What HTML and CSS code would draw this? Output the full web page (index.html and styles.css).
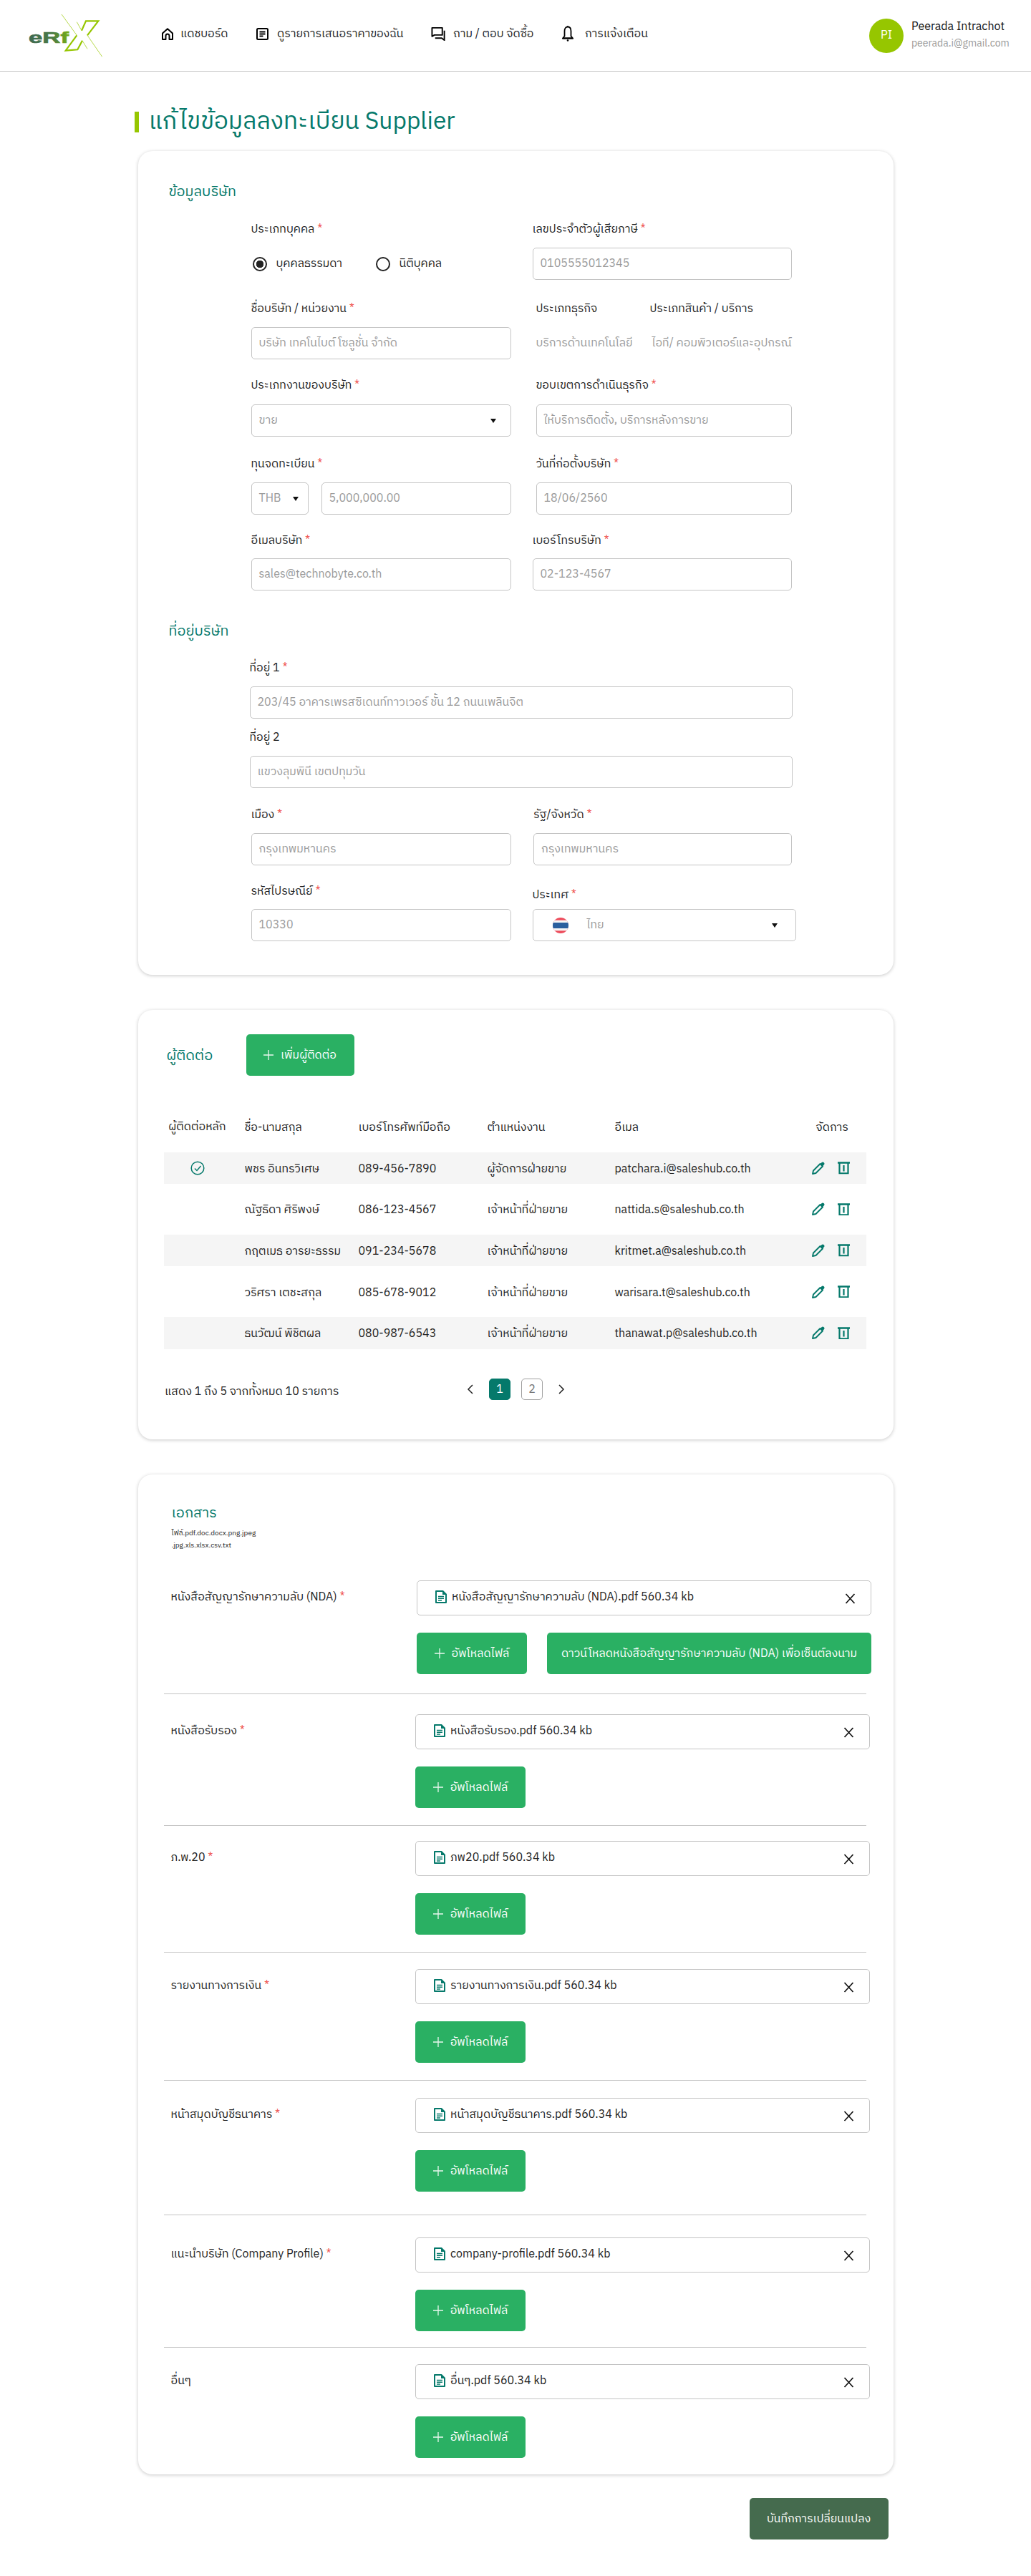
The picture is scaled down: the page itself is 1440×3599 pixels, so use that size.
FILE: index.html
```html
<!DOCTYPE html>
<html lang="th">
<head>
<meta charset="utf-8">
<title>แก้ไขข้อมูลลงทะเบียน Supplier</title>
<link rel="stylesheet" href="styles.css">
</head>
<body>
<svg class="sprite" width="0" height="0" aria-hidden="true">
  <defs>
    <symbol id="i-file" viewBox="0 0 16 18"><path d="M1 1h9.500L15 5.500V17H1z" fill="#fff" stroke="#05796b" stroke-width="2" stroke-linejoin="round"/><path d="M10 1l5 5h-5z" fill="#05796b"/><path d="M4 8.500h8M4 11.300h8M4 14h5" stroke="#05796b" stroke-width="1.600"/></symbol>
    <symbol id="i-x" viewBox="0 0 15 15"><path d="M1.500 1l12 13M13.500 1l-12 13" stroke="#111" stroke-width="1.700" fill="none"/></symbol>
    <symbol id="i-plus" viewBox="0 0 14 14"><path d="M7 0v14M0 7h14" stroke="#fff" stroke-width="1.300" opacity=".9"/></symbol>
    <symbol id="i-pen" viewBox="0 0 18 18"><path d="M1 17l1-4.500L11.500 3 15 6.500 5.500 16z" fill="none" stroke="#05796b" stroke-width="1.900" stroke-linejoin="round"/><path d="M11.500 3.500l2-2.200a2.100 2.100 0 0 1 3.200 3.200l-2 2.200z" fill="#05796b"/></symbol>
    <symbol id="i-trash" viewBox="0 0 17 17.400"><path d="M0 1.500h17" stroke="#05796b" stroke-width="2.400"/><path d="M2.500 2v14.300h12V2" fill="none" stroke="#05796b" stroke-width="2.200"/><path d="M8.500 5v8.500" stroke="#05796b" stroke-width="2.200"/></symbol>
  </defs>
</svg>

<header class="topbar">
  <svg class="logo" viewBox="0 0 103 60" role="img" aria-label="eRfX">
    <defs>
      <linearGradient id="logo-grad" gradientUnits="userSpaceOnUse" x1="0" x2="56" y1="0" y2="0"><stop offset="0" stop-color="#3f6a52"/><stop offset=".6" stop-color="#4a7a44"/><stop offset="1" stop-color="#76ae14"/></linearGradient>
    </defs>
    <text x="0" y="40" class="logo-text" fill="url(#logo-grad)" textLength="56" lengthAdjust="spacingAndGlyphs">eRf</text>
    <path d="M74 22.700L80 9.300h17.300L82 29.300M67.300 29.300L51.700 50.700 68.300 49.300 75 36.700" fill="none" stroke="#96c600" stroke-width="2.200"/>
    <path d="M46 0L67.300 29.300M67.300 10.700L74 22.700M82 29.300L102.700 59.300M75 36.700L82 48.300" fill="none" stroke="#a4cf1e" stroke-width=".8"/>
  </svg>
  <nav class="nav">
    <a class="nav-item">
      <svg class="nav-icon nav-icon-home" viewBox="0 0 16 17"><path d="M8 1.300L15 7.500V16h-4.500v-5a2.500 2.500 0 0 0-5 0v5H1V7.500z" fill="none" stroke="#000" stroke-width="2" stroke-linejoin="round"/></svg>
      <span>แดชบอร์ด</span>
    </a>
    <a class="nav-item nav-item-docs">
      <svg class="nav-icon nav-icon-doc" viewBox="0 0 17 17"><rect x="1" y="1" width="15" height="15" rx="1.500" fill="none" stroke="#000" stroke-width="2"/><path d="M4.500 5.500h8M4.500 8.500h8M4.500 11.500h5" stroke="#000" stroke-width="1.800"/></svg>
      <span>ดูรายการเสนอราคาของฉัน</span>
    </a>
    <a class="nav-item">
      <svg class="nav-icon nav-icon-wide" viewBox="0 0 22 20"><path d="M1.500 1.500h15v10.500H5l-3.500 2z" fill="none" stroke="#000" stroke-width="2" stroke-linejoin="round"/><path d="M19.500 5.500v14l-4-3H6" fill="none" stroke="#000" stroke-width="2"/></svg>
      <span>ถาม / ตอบ จัดซื้อ</span>
    </a>
    <a class="nav-item nav-item-bell">
      <svg class="nav-icon" viewBox="0 0 16 22"><path d="M8 1.500c3 0 4.500 2.500 4.500 6v7l2.500 3H1l2.500-3v-7c0-3.500 1.500-6 4.500-6z" fill="none" stroke="#000" stroke-width="1.800"/><path d="M1 17.500h14" stroke="#000" stroke-width="2"/><circle cx="8" cy="20.500" r="1.300"/><circle cx="8" cy="1" r="1"/></svg>
      <span>การแจ้งเตือน</span>
    </a>
  </nav>
  <div class="user">
    <div class="avatar">PI</div>
    <div class="user-text">
      <div class="user-name">Peerada Intrachot</div>
      <div class="user-mail">peerada.i@gmail.com</div>
    </div>
  </div>
</header>

<main class="page">
  <h1 class="page-title">แก้ไขข้อมูลลงทะเบียน Supplier</h1>

  <section class="card card-company">
    <h2 class="section-title">ข้อมูลบริษัท</h2>
    <div class="form-row row-1">
      <div class="field">
        <div class="label">ประเภทบุคคล <em>*</em></div>
        <div class="radios">
          <span class="radio radio-on"></span><span class="radio-text">บุคคลธรรมดา</span>
          <span class="radio"></span><span class="radio-text">นิติบุคคล</span>
        </div>
      </div>
      <div class="field">
        <div class="label">เลขประจำตัวผู้เสียภาษี <em>*</em></div>
        <div class="input">0105555012345</div>
      </div>
    </div>
    <div class="form-row row-2">
      <div class="field">
        <div class="label">ชื่อบริษัท / หน่วยงาน <em>*</em></div>
        <div class="input">บริษัท เทคโนไบต์ โซลูชั่น จำกัด</div>
      </div>
      <div class="field-pair">
        <div class="field plain-a">
          <div class="label">ประเภทธุรกิจ</div>
          <div class="plain">บริการด้านเทคโนโลยี</div>
        </div>
        <div class="field plain-b">
          <div class="label">ประเภทสินค้า / บริการ</div>
          <div class="plain">ไอที/ คอมพิวเตอร์และอุปกรณ์</div>
        </div>
      </div>
    </div>
    <div class="form-row row-3">
      <div class="field">
        <div class="label">ประเภทงานของบริษัท <em>*</em></div>
        <div class="input select"><span>ขาย</span><i class="caret"></i></div>
      </div>
      <div class="field shift-5">
        <div class="label">ขอบเขตการดำเนินธุรกิจ <em>*</em></div>
        <div class="input">ให้บริการติดตั้ง, บริการหลังการขาย</div>
      </div>
    </div>
    <div class="form-row row-4">
      <div class="field">
        <div class="label">ทุนจดทะเบียน <em>*</em></div>
        <div class="money">
          <div class="input select currency"><span>THB</span><i class="caret"></i></div>
          <div class="input">5,000,000.00</div>
        </div>
      </div>
      <div class="field shift-5">
        <div class="label">วันที่ก่อตั้งบริษัท <em>*</em></div>
        <div class="input">18/06/2560</div>
      </div>
    </div>
    <div class="form-row row-5">
      <div class="field">
        <div class="label">อีเมลบริษัท <em>*</em></div>
        <div class="input">sales@technobyte.co.th</div>
      </div>
      <div class="field">
        <div class="label">เบอร์โทรบริษัท <em>*</em></div>
        <div class="input">02-123-4567</div>
      </div>
    </div>

    <h2 class="section-title section-title-address">ที่อยู่บริษัท</h2>
    <div class="field wide row-a1">
      <div class="label">ที่อยู่ 1 <em>*</em></div>
      <div class="input">203/45 อาคารเพรสซิเดนท์ทาวเวอร์ ชั้น 12 ถนนเพลินจิต</div>
    </div>
    <div class="field wide row-a2">
      <div class="label">ที่อยู่ 2</div>
      <div class="input">แขวงลุมพินี เขตปทุมวัน</div>
    </div>
    <div class="form-row row-a3">
      <div class="field">
        <div class="label">เมือง <em>*</em></div>
        <div class="input">กรุงเทพมหานคร</div>
      </div>
      <div class="field shift-2">
        <div class="label">รัฐ/จังหวัด <em>*</em></div>
        <div class="input">กรุงเทพมหานคร</div>
      </div>
    </div>
    <div class="form-row row-a4">
      <div class="field">
        <div class="label">รหัสไปรษณีย์ <em>*</em></div>
        <div class="input">10330</div>
      </div>
      <div class="field country">
        <div class="label">ประเทศ <em>*</em></div>
        <div class="input select">
          <svg class="flag" viewBox="0 0 22 22"><defs><clipPath id="flag-clip"><circle cx="11" cy="11" r="11"/></clipPath></defs><g clip-path="url(#flag-clip)"><rect width="22" height="22" fill="#ed4c5c"/><rect y="3.700" width="22" height="14.600" fill="#f5f5f5"/><rect y="7" width="22" height="8" fill="#2a5f9e"/></g></svg>
          <span class="country-name">ไทย</span><i class="caret"></i>
        </div>
      </div>
    </div>
  </section>

  <section class="card card-contacts">
    <div class="contacts-head">
      <h2 class="section-title contacts-title">ผู้ติดต่อ</h2>
      <button class="btn btn-add"><svg class="plus"><use href="#i-plus"/></svg>เพิ่มผู้ติดต่อ</button>
    </div>
    <table class="contacts">
      <colgroup><col class="c1"><col class="c2"><col class="c3"><col class="c4"><col class="c5"><col class="c6"></colgroup>
      <thead>
        <tr><th class="cell-main">ผู้ติดต่อหลัก</th><th>ชื่อ-นามสกุล</th><th>เบอร์โทรศัพท์มือถือ</th><th>ตำแหน่งงาน</th><th>อีเมล</th><th class="cell-actions-head">จัดการ</th></tr>
      </thead>
      <tbody>
        <tr>
          <td class="cell-main"><svg class="check" viewBox="0 0 20 20"><circle cx="10" cy="10" r="8.800" fill="none" stroke="#05796b" stroke-width="1.500"/><path d="M6 10.500l3 3 5.500-6.500" fill="none" stroke="#05796b" stroke-width="1.500"/></svg></td>
          <td>พชร อินทรวิเศษ</td><td>089-456-7890</td><td>ผู้จัดการฝ่ายขาย</td><td>patchara.i@saleshub.co.th</td>
          <td class="cell-actions"><svg class="act-pen"><use href="#i-pen"/></svg><svg class="act-trash"><use href="#i-trash"/></svg></td>
        </tr>
        <tr>
          <td></td><td>ณัฐธิดา ศิริพงษ์</td><td>086-123-4567</td><td>เจ้าหน้าที่ฝ่ายขาย</td><td>nattida.s@saleshub.co.th</td>
          <td class="cell-actions"><svg class="act-pen"><use href="#i-pen"/></svg><svg class="act-trash"><use href="#i-trash"/></svg></td>
        </tr>
        <tr>
          <td></td><td>กฤตเมธ อารยะธรรม</td><td>091-234-5678</td><td>เจ้าหน้าที่ฝ่ายขาย</td><td>kritmet.a@saleshub.co.th</td>
          <td class="cell-actions"><svg class="act-pen"><use href="#i-pen"/></svg><svg class="act-trash"><use href="#i-trash"/></svg></td>
        </tr>
        <tr>
          <td></td><td>วริศรา เตชะสกุล</td><td>085-678-9012</td><td>เจ้าหน้าที่ฝ่ายขาย</td><td>warisara.t@saleshub.co.th</td>
          <td class="cell-actions"><svg class="act-pen"><use href="#i-pen"/></svg><svg class="act-trash"><use href="#i-trash"/></svg></td>
        </tr>
        <tr>
          <td></td><td>ธนวัฒน์ พิชิตผล</td><td>080-987-6543</td><td>เจ้าหน้าที่ฝ่ายขาย</td><td>thanawat.p@saleshub.co.th</td>
          <td class="cell-actions"><svg class="act-pen"><use href="#i-pen"/></svg><svg class="act-trash"><use href="#i-trash"/></svg></td>
        </tr>
      </tbody>
    </table>
    <div class="pager-row">
      <div class="pager-text">แสดง 1 ถึง 5 จากทั้งหมด 10 รายการ</div>
      <div class="pager">
        <svg class="chev" viewBox="0 0 10 16"><path d="M8 2L2 8l6 6" fill="none" stroke="#222" stroke-width="1.500"/></svg>
        <span class="page-num page-on">1</span>
        <span class="page-num">2</span>
        <svg class="chev" viewBox="0 0 10 16"><path d="M2 2l6 6-6 6" fill="none" stroke="#222" stroke-width="1.500"/></svg>
      </div>
    </div>
  </section>

  <section class="card card-docs">
    <h2 class="section-title docs-title">เอกสาร</h2>
    <p class="docs-hint">ไฟล์.pdf.doc.docx.png.jpeg<br>.jpg.xls.xlsx.csv.txt</p>

    <div class="doc-row doc-1">
      <div class="doc-label">หนังสือสัญญารักษาความลับ (NDA) <em>*</em></div>
      <div class="doc-body">
        <div class="file"><svg class="file-icon"><use href="#i-file"/></svg><span class="file-name">หนังสือสัญญารักษาความลับ (NDA).pdf 560.34 kb</span><svg class="file-x"><use href="#i-x"/></svg></div>
        <div class="doc-actions">
          <button class="btn btn-upload"><svg class="plus"><use href="#i-plus"/></svg>อัพโหลดไฟล์</button>
          <button class="btn btn-download">ดาวน์โหลดหนังสือสัญญารักษาความลับ (NDA) เพื่อเซ็นต์ลงนาม</button>
        </div>
      </div>
    </div>
    <div class="doc-row doc-2">
      <div class="doc-label">หนังสือรับรอง <em>*</em></div>
      <div class="doc-body">
        <div class="file"><svg class="file-icon"><use href="#i-file"/></svg><span class="file-name">หนังสือรับรอง.pdf 560.34 kb</span><svg class="file-x"><use href="#i-x"/></svg></div>
        <div class="doc-actions"><button class="btn btn-upload"><svg class="plus"><use href="#i-plus"/></svg>อัพโหลดไฟล์</button></div>
      </div>
    </div>
    <div class="doc-row doc-3">
      <div class="doc-label">ภ.พ.20 <em>*</em></div>
      <div class="doc-body">
        <div class="file"><svg class="file-icon"><use href="#i-file"/></svg><span class="file-name">ภพ20.pdf 560.34 kb</span><svg class="file-x"><use href="#i-x"/></svg></div>
        <div class="doc-actions"><button class="btn btn-upload"><svg class="plus"><use href="#i-plus"/></svg>อัพโหลดไฟล์</button></div>
      </div>
    </div>
    <div class="doc-row doc-4">
      <div class="doc-label">รายงานทางการเงิน <em>*</em></div>
      <div class="doc-body">
        <div class="file"><svg class="file-icon"><use href="#i-file"/></svg><span class="file-name">รายงานทางการเงิน.pdf 560.34 kb</span><svg class="file-x"><use href="#i-x"/></svg></div>
        <div class="doc-actions"><button class="btn btn-upload"><svg class="plus"><use href="#i-plus"/></svg>อัพโหลดไฟล์</button></div>
      </div>
    </div>
    <div class="doc-row doc-5">
      <div class="doc-label">หน้าสมุดบัญชีธนาคาร <em>*</em></div>
      <div class="doc-body">
        <div class="file"><svg class="file-icon"><use href="#i-file"/></svg><span class="file-name">หน้าสมุดบัญชีธนาคาร.pdf 560.34 kb</span><svg class="file-x"><use href="#i-x"/></svg></div>
        <div class="doc-actions"><button class="btn btn-upload"><svg class="plus"><use href="#i-plus"/></svg>อัพโหลดไฟล์</button></div>
      </div>
    </div>
    <div class="doc-row doc-6">
      <div class="doc-label">แนะนำบริษัท (Company Profile) <em>*</em></div>
      <div class="doc-body">
        <div class="file"><svg class="file-icon"><use href="#i-file"/></svg><span class="file-name">company-profile.pdf 560.34 kb</span><svg class="file-x"><use href="#i-x"/></svg></div>
        <div class="doc-actions"><button class="btn btn-upload"><svg class="plus"><use href="#i-plus"/></svg>อัพโหลดไฟล์</button></div>
      </div>
    </div>
    <div class="doc-row doc-7">
      <div class="doc-label">อื่นๆ</div>
      <div class="doc-body">
        <div class="file"><svg class="file-icon"><use href="#i-file"/></svg><span class="file-name">อื่นๆ.pdf 560.34 kb</span><svg class="file-x"><use href="#i-x"/></svg></div>
        <div class="doc-actions"><button class="btn btn-upload"><svg class="plus"><use href="#i-plus"/></svg>อัพโหลดไฟล์</button></div>
      </div>
    </div>
  </section>

  <div class="save-row"><button class="btn btn-save">บันทึกการเปลี่ยนแปลง</button></div>
</main>
</body>
</html>
```
FILE: styles.css
```css
* { box-sizing: border-box; }
html, body { margin: 0; padding: 0; }
body { background: #fff; color: #1c1c1c; font-family: "IBM Plex Sans Thai", "Noto Sans", "Liberation Sans", sans-serif; font-size: 16px; }
.sprite { position: absolute; }
em { color: #ef5350; font-style: normal; }

.topbar { display: flex; align-items: center; height: 100px; padding-left: 40px; border-bottom: 1px solid #c4c4c4; }
.logo { width: 103px; height: 60px; flex: none; }
.logo-text { font-family: "Liberation Sans", sans-serif; font-weight: 700; font-size: 22px; stroke: url(#logo-grad); stroke-width: .7px; }
.nav { display: grid; grid-template-columns: 132px 244px 181px auto; margin: 0 0 5px 83px; }
.nav-item { display: flex; align-items: center; gap: 10px; font-size: 16px; color: #222; }
.nav-item-docs { gap: 12px; }
.nav-icon { width: 18px; height: 20px; flex: none; }
.nav-icon-home { width: 16px; height: 17px; }
.nav-icon-doc { width: 17px; height: 17px; }
.nav-icon-wide { width: 21px; }
.nav-item-bell { gap: 16px; }
.nav-item-bell .nav-icon { width: 16px; height: 22px; margin-left: 2px; }
.user { display: flex; align-items: center; gap: 11px; margin-left: auto; width: 226px; }
.avatar { width: 48px; height: 48px; border-radius: 50%; background: #96c600; color: #fff; display: flex; align-items: center; justify-content: center; font-size: 16px; }
.user-name { font-size: 16px; color: #111; line-height: 22px; }
.user-mail { font-size: 14px; color: #9a9a9a; line-height: 24px; }

.page { width: 1055px; margin: 0 auto; padding-bottom: 51px; }
.page-title { margin: 56px 0 0 -5px; height: 29px; padding-left: 14px; border-left: 6px solid #96c600; font-size: 33.600px; font-weight: 400; line-height: 29px; color: #05796b; white-space: nowrap; }

.card { background: #fff; border-radius: 20px; box-shadow: 0 1px 5px rgba(0,0,0,.22); }
.card-company { margin-top: 26px; height: 1151px; padding: 41px 0 0 43px; }
.card-contacts { margin-top: 49px; height: 600px; padding: 34px 36px 0; }
.card-docs { margin-top: 49px; height: 1397px; padding: 38px 36px 0; }

.section-title { margin: 0; height: 30px; font-size: 20px; font-weight: 400; line-height: 33px; color: #05796b; }

.form-row { display: grid; grid-template-columns: 363px 362px; column-gap: 30px; margin-left: 115px; }
.field { display: flex; flex-direction: column; gap: 15px; }
.field-pair { display: flex; }
.label { height: 24px; line-height: 28px; font-size: 16px; color: #222; white-space: nowrap; }
.input { display: flex; align-items: center; height: 45px; padding: 0 10px; border: 1px solid #c4c4c4; border-radius: 5px; color: #9a9a9a; font-size: 16px; white-space: nowrap; overflow: hidden; }
.select { justify-content: space-between; padding-right: 20px; }
.caret { width: 0; height: 0; border: 4.500px solid transparent; border-top: 6px solid #111; border-bottom: 0; flex: none; }
.shift-5 { margin-left: 5px; }
.shift-2 { margin-left: 1.500px; }

.row-1 { margin-top: 25px; }
.row-2 { margin-top: 27px; }
.row-3 { margin-top: 23px; }
.row-4 { margin-top: 25px; }
.row-5 { margin-top: 23px; }
.row-5 .field { gap: 14px; }
.row-3 .field { gap: 16px; }

.radios { display: flex; align-items: center; height: 45px; margin-left: 2px; font-size: 16px; color: #222; }
.radio { width: 20px; height: 20px; border: 2px solid #222; border-radius: 50%; flex: none; display: flex; }
.radio-on { background: radial-gradient(circle, #222 0 5px, #fff 5.500px); }
.radio-text { margin-left: 13px; width: 139px; }

.plain-a { width: 160px; margin-left: 5px; }
.plain-b { width: 199px; }
.plain { height: 45px; line-height: 45px; font-size: 16px; color: #9a9a9a; white-space: nowrap; }
.plain-b .plain { margin-left: 3px; }

.money { display: flex; gap: 17.500px; }
.currency { width: 80.500px; flex: none; padding-right: 13.500px; }
.money .input:last-child { flex: 1; }

.section-title-address { margin-top: 41px; }
.wide { margin-left: 113px; width: 758px; }
.row-a1 { margin-top: 24px; }
.row-a2 { margin-top: 13px; }
.row-a3 { margin-top: 24px; }
.row-a4 { margin-top: 23px; }
.row-a4 .field { gap: 14px; }
.country { margin: 5px 0 0 0; width: 368px; gap: 9px !important; }
.country .input { padding-left: 27px; padding-right: 25px; }
.flag { width: 22px; height: 22px; flex: none; }
.country-name { margin-left: 26px; margin-right: auto; }

.contacts-head { display: flex; align-items: center; padding-left: 4px; }
.contacts-title { width: 111px; }
.btn { display: inline-flex; align-items: center; justify-content: center; height: 58px; border: 0; border-radius: 5px; background: #2ab063; color: #fff; font-family: inherit; font-size: 16px; white-space: nowrap; padding: 0; }
.btn-add { width: 151px; }
.plus { width: 14px; height: 14px; margin-right: 10px; flex: none; }

.contacts { width: 981px; table-layout: fixed; border-collapse: separate; border-spacing: 0 13.600px; margin-top: 36px; margin-left: 0; }
.c1 { width: 113px; } .c2 { width: 159px; } .c3 { width: 180px; } .c4 { width: 178px; } .c5 { width: 271px; } .c6 { width: 80px; }
.contacts th, .contacts td { height: 44.600px; padding: 3px 0 0; text-align: left; font-size: 16px; font-weight: 400; color: #222; white-space: nowrap; }
.contacts tbody tr:nth-child(odd) td { background: #f5f5f5; }
.contacts .cell-main { text-align: center; padding: 0 19px 0 0; }
.check { width: 20px; height: 20px; display: block; margin: 0 auto; }
.contacts .cell-actions-head { padding-left: 10px; }
.contacts .cell-actions { font-size: 0; padding: 0 0 0 4px; }
.act-pen { width: 18px; height: 18px; margin-right: 18px; vertical-align: middle; }
.act-trash { width: 17px; height: 17.400px; vertical-align: middle; }

.pager-row { display: flex; align-items: center; margin-top: 27px; padding-left: 1.500px; }
.pager-text { width: 422px; font-size: 16px; color: #222; padding-top: 6px; }
.pager { display: flex; align-items: center; gap: 15px; }
.chev { width: 10px; height: 16px; margin: 0 6px 0 0; }
.chev:last-child { margin: 0 0 0 6px; }
.page-num { width: 30px; height: 30px; border: 1px solid #a0a0a0; border-radius: 5px; display: flex; align-items: center; justify-content: center; font-size: 16px; color: #777; }
.page-on { background: #05796b; border-color: #05796b; color: #fff; }

.docs-title { margin-left: 11px; }
.docs-hint { margin: 6px 0 0 11px; font-size: 10px; line-height: 17px; color: #222; }
.doc-row { display: flex; border-bottom: 1px solid #c4c4c4; width: 981px; padding-left: 10px; }
.doc-row:last-child { border-bottom: 0; }
.doc-label { width: 341.500px; flex: none; padding-top: 10px; line-height: 27px; font-size: 16px; color: #222; white-space: nowrap; }
.doc-body { width: 635px; flex: none; }
.file { display: flex; align-items: flex-start; height: 49px; padding: 10px 21px 0 25px; border: 1px solid #c4c4c4; border-radius: 5px; }
.file-icon { width: 16px; height: 18px; margin-top: 3px; flex: none; }
.file-name { margin-left: 7px; line-height: 25px; font-size: 16px; color: #222; white-space: nowrap; }
.file-x { width: 15px; height: 15px; margin: 7px 0 0 auto; flex: none; }
.doc-actions { display: flex; gap: 28px; margin-top: 24px; }
.btn-upload { width: 154px; }
.btn-download { width: 454px; }
.doc-1 { padding-top: 40px; padding-bottom: 27px; }
.doc-1 .doc-label { width: 343.600px; }
.doc-2 { padding-top: 28px; padding-bottom: 24px; }
.doc-3 { padding-top: 21px; padding-bottom: 24px; }
.doc-4 { padding-top: 23px; padding-bottom: 24px; }
.doc-5 { padding-top: 24px; padding-bottom: 32px; }
.doc-6 { padding-top: 31px; padding-bottom: 22px; }
.doc-7 { padding-top: 23px; }

.save-row { display: flex; justify-content: flex-end; margin-top: 33px; padding-right: 7px; }
.btn-save { width: 194px; background: #456b4e; }
```
